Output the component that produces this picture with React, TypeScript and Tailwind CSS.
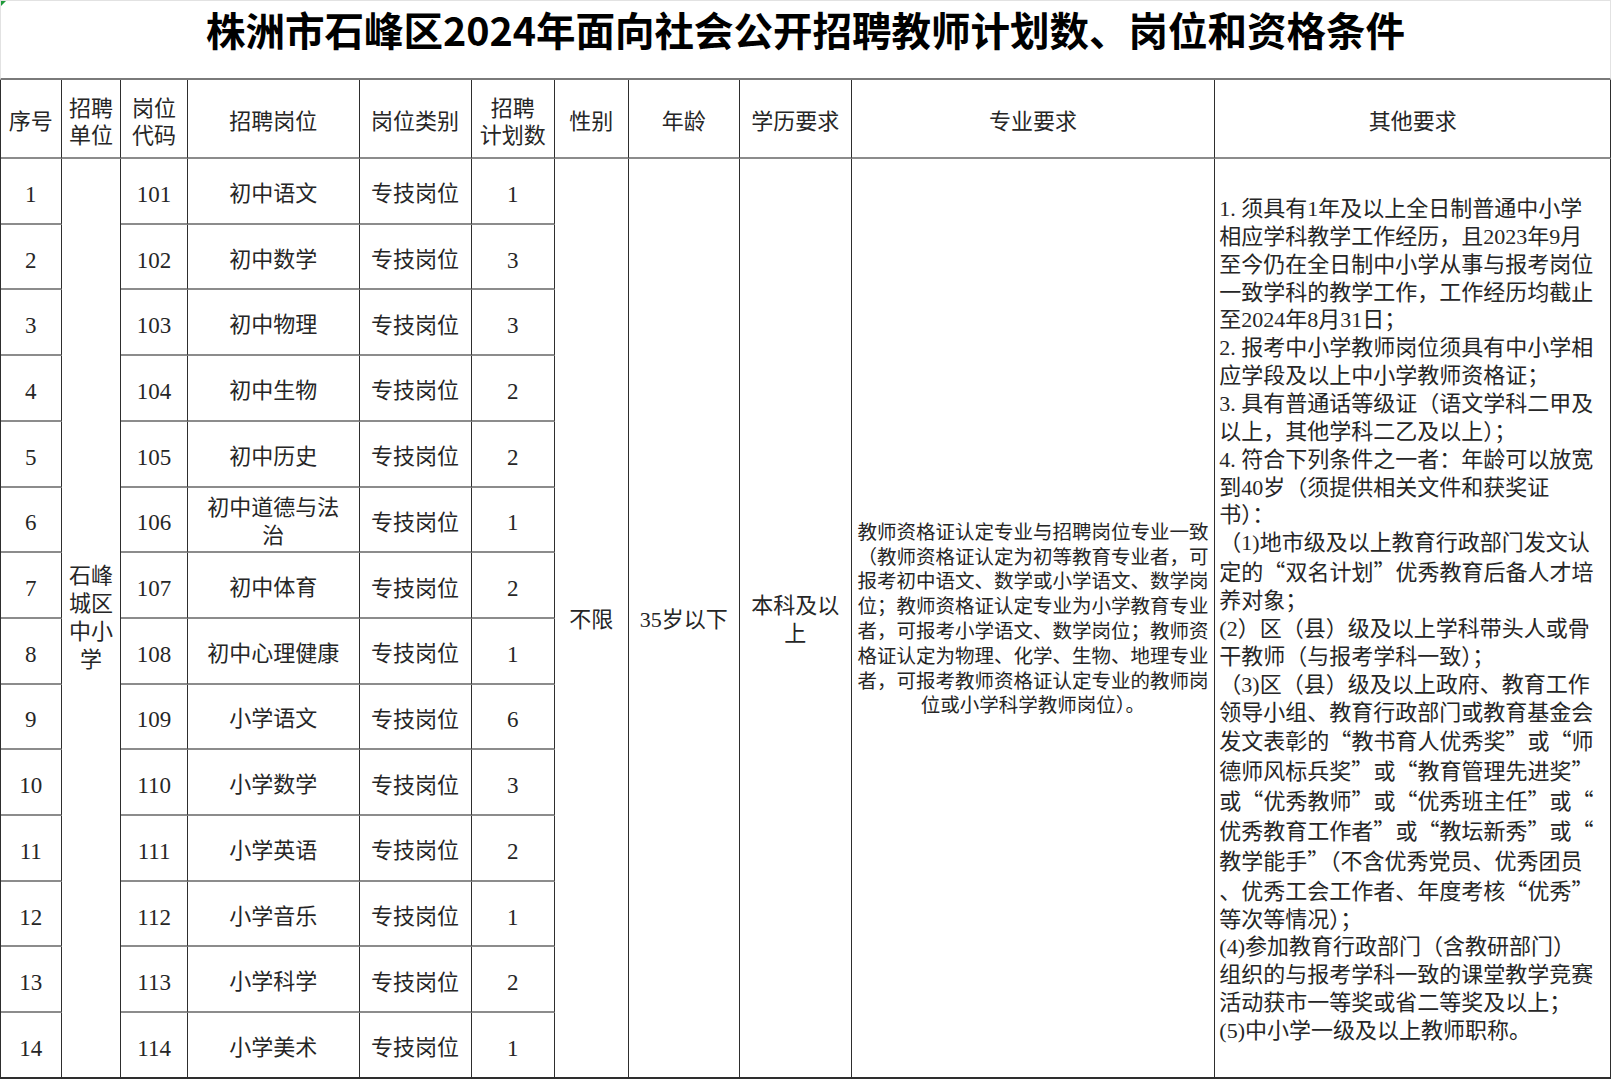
import React from "react";

const body = "font-['Liberation_Serif','Noto_Sans_CJK_SC',serif]";
const cjk = "font-['Noto_Sans_CJK_SC',sans-serif]";

const rows: [string, string, string[], string][] = [
  ["1", "101", ["初中语文"], "1"],
  ["2", "102", ["初中数学"], "3"],
  ["3", "103", ["初中物理"], "3"],
  ["4", "104", ["初中生物"], "2"],
  ["5", "105", ["初中历史"], "2"],
  ["6", "106", ["初中道德与法", "治"], "1"],
  ["7", "107", ["初中体育"], "2"],
  ["8", "108", ["初中心理健康"], "1"],
  ["9", "109", ["小学语文"], "6"],
  ["10", "110", ["小学数学"], "3"],
  ["11", "111", ["小学英语"], "2"],
  ["12", "112", ["小学音乐"], "1"],
  ["13", "113", ["小学科学"], "2"],
  ["14", "114", ["小学美术"], "1"],
];

const major = [
  "教师资格证认定专业与招聘岗位专业一致",
  "（教师资格证认定为初等教育专业者，可",
  "报考初中语文、数学或小学语文、数学岗",
  "位；教师资格证认定专业为小学教育专业",
  "者，可报考小学语文、数学岗位；教师资",
  "格证认定为物理、化学、生物、地理专业",
  "者，可报考教师资格证认定专业的教师岗",
  "位或小学科学教师岗位）。",
];

const other = [
  "1. 须具有1年及以上全日制普通中小学",
  "相应学科教学工作经历，且2023年9月",
  "至今仍在全日制中小学从事与报考岗位",
  "一致学科的教学工作，工作经历均截止",
  "至2024年8月31日；",
  "2. 报考中小学教师岗位须具有中小学相",
  "应学段及以上中小学教师资格证；",
  "3. 具有普通话等级证（语文学科二甲及",
  "以上，其他学科二乙及以上）；",
  "4. 符合下列条件之一者：年龄可以放宽",
  "到40岁（须提供相关文件和获奖证",
  "书）：",
  "（1)地市级及以上教育行政部门发文认",
  "定的“双名计划”优秀教育后备人才培",
  "养对象；",
  "(2）区（县）级及以上学科带头人或骨",
  "干教师（与报考学科一致）；",
  "（3)区（县）级及以上政府、教育工作",
  "领导小组、教育行政部门或教育基金会",
  "发文表彰的“教书育人优秀奖”或“师",
  "德师风标兵奖”或“教育管理先进奖”",
  "或“优秀教师”或“优秀班主任”或“",
  "优秀教育工作者”或“教坛新秀”或“",
  "教学能手”（不含优秀党员、优秀团员",
  "、优秀工会工作者、年度考核“优秀”",
  "等次等情况）；",
  "(4)参加教育行政部门（含教研部门）",
  "组织的与报考学科一致的课堂教学竞赛",
  "活动获市一等奖或省二等奖及以上；",
  "(5)中小学一级及以上教师职称。",
];

// quotes come from the CJK font so they stay full width
function Line({ text }: { text: string }) {
  return (
    <div className="whitespace-pre">
      {text.split(/([“”])/).map((part, i) =>
        part === "“" || part === "”" ? (
          <span key={i} className={cjk}>
            {part}
          </span>
        ) : (
          <span key={i}>{part}</span>
        )
      )}
    </div>
  );
}

const cell =
  "flex flex-col items-center justify-center text-center border-r border-r-[#2e2e2e] border-b-2";
const rowLine = "border-b-[#8c8c8c]";
const lastLine = "border-b-[#2e2e2e]";

export default function App() {
  return (
    <div className={`w-[1611px] h-[1080px] bg-white text-[#262626] ${body}`}>
      {/* Title */}
      <div className="relative h-[80px] border-t border-l border-r border-[#e2e2e2] border-b-2 border-b-[#7a7a7a] pt-[6px] text-center">
        <div className="absolute top-0 left-0 w-0 h-0 border-t-[5px] border-r-[5px] border-t-[#1f9a3a] border-r-transparent" />
        <h1 className={`${cjk} font-bold text-[39.5px] leading-[44px] text-black`}>
          株洲市石峰区2024年面向社会公开招聘教师计划数、岗位和资格条件
        </h1>
      </div>

      {/* Table */}
      <div className="grid grid-cols-[60.6px_59.6px_66.8px_171.6px_112px_83.2px_73.9px_111px_112px_363.7px_395.6px] grid-rows-[79px_repeat(14,65.71px)] border-l border-l-[#2e2e2e] text-[22px] leading-[27px]">
        {/* Header */}
        <div className={`${cell} ${rowLine} pt-[6px]`}>序号</div>
        <div className={`${cell} ${rowLine} pt-[6px]`}>
          <div>招聘</div>
          <div>单位</div>
        </div>
        <div className={`${cell} ${rowLine} pt-[6px]`}>
          <div>岗位</div>
          <div>代码</div>
        </div>
        <div className={`${cell} ${rowLine} pt-[6px]`}>招聘岗位</div>
        <div className={`${cell} ${rowLine} pt-[6px]`}>岗位类别</div>
        <div className={`${cell} ${rowLine} pt-[6px]`}>
          <div>招聘</div>
          <div>计划数</div>
        </div>
        <div className={`${cell} ${rowLine} pt-[6px]`}>性别</div>
        <div className={`${cell} ${rowLine} pt-[6px]`}>年龄</div>
        <div className={`${cell} ${rowLine} pt-[6px]`}>学历要求</div>
        <div className={`${cell} ${rowLine} pt-[6px]`}>专业要求</div>
        <div className={`${cell} ${rowLine} pt-[6px]`}>其他要求</div>

        {rows.map(([no, code, post, count], i) => {
          const line = i === rows.length - 1 ? lastLine : rowLine;
          return (
            <React.Fragment key={no}>
              <div className={`${cell} ${line} pt-[7px] text-[23px]`}>{no}</div>
              {i === 0 && (
                <div className={`${cell} ${lastLine} row-span-14 leading-[28px]`}>
                  <div>石峰</div>
                  <div>城区</div>
                  <div>中小</div>
                  <div>学</div>
                </div>
              )}
              <div className={`${cell} ${line} pt-[7px] text-[23px]`}>{code}</div>
              <div className={`${cell} ${line} pt-[6px] leading-[28px]`}>
                {post.map((p) => (
                  <div key={p}>{p}</div>
                ))}
              </div>
              <div className={`${cell} ${line} pt-[6px]`}>专技岗位</div>
              <div className={`${cell} ${line} pt-[7px] text-[23px]`}>{count}</div>
              {i === 0 && (
                <>
                  <div className={`${cell} ${lastLine} row-span-14 pt-[4px]`}>不限</div>
                  <div className={`${cell} ${lastLine} row-span-14 pt-[4px]`}>35岁以下</div>
                  <div className={`${cell} ${lastLine} row-span-14 leading-[28px] pt-[4px]`}>
                    <div>本科及以</div>
                    <div>上</div>
                  </div>
                  <div className={`${cell} ${lastLine} row-span-14 text-[19.5px] leading-[24.8px] pt-[4px]`}>
                    {major.map((m) => (
                      <Line key={m} text={m} />
                    ))}
                  </div>
                  <div className={`${cell} ${lastLine} row-span-14 !items-start !text-left pl-[4px] pt-[4px] leading-[27.86px]`}>
                    {other.map((o) => (
                      <Line key={o} text={o} />
                    ))}
                  </div>
                </>
              )}
            </React.Fragment>
          );
        })}
      </div>
    </div>
  );
}
